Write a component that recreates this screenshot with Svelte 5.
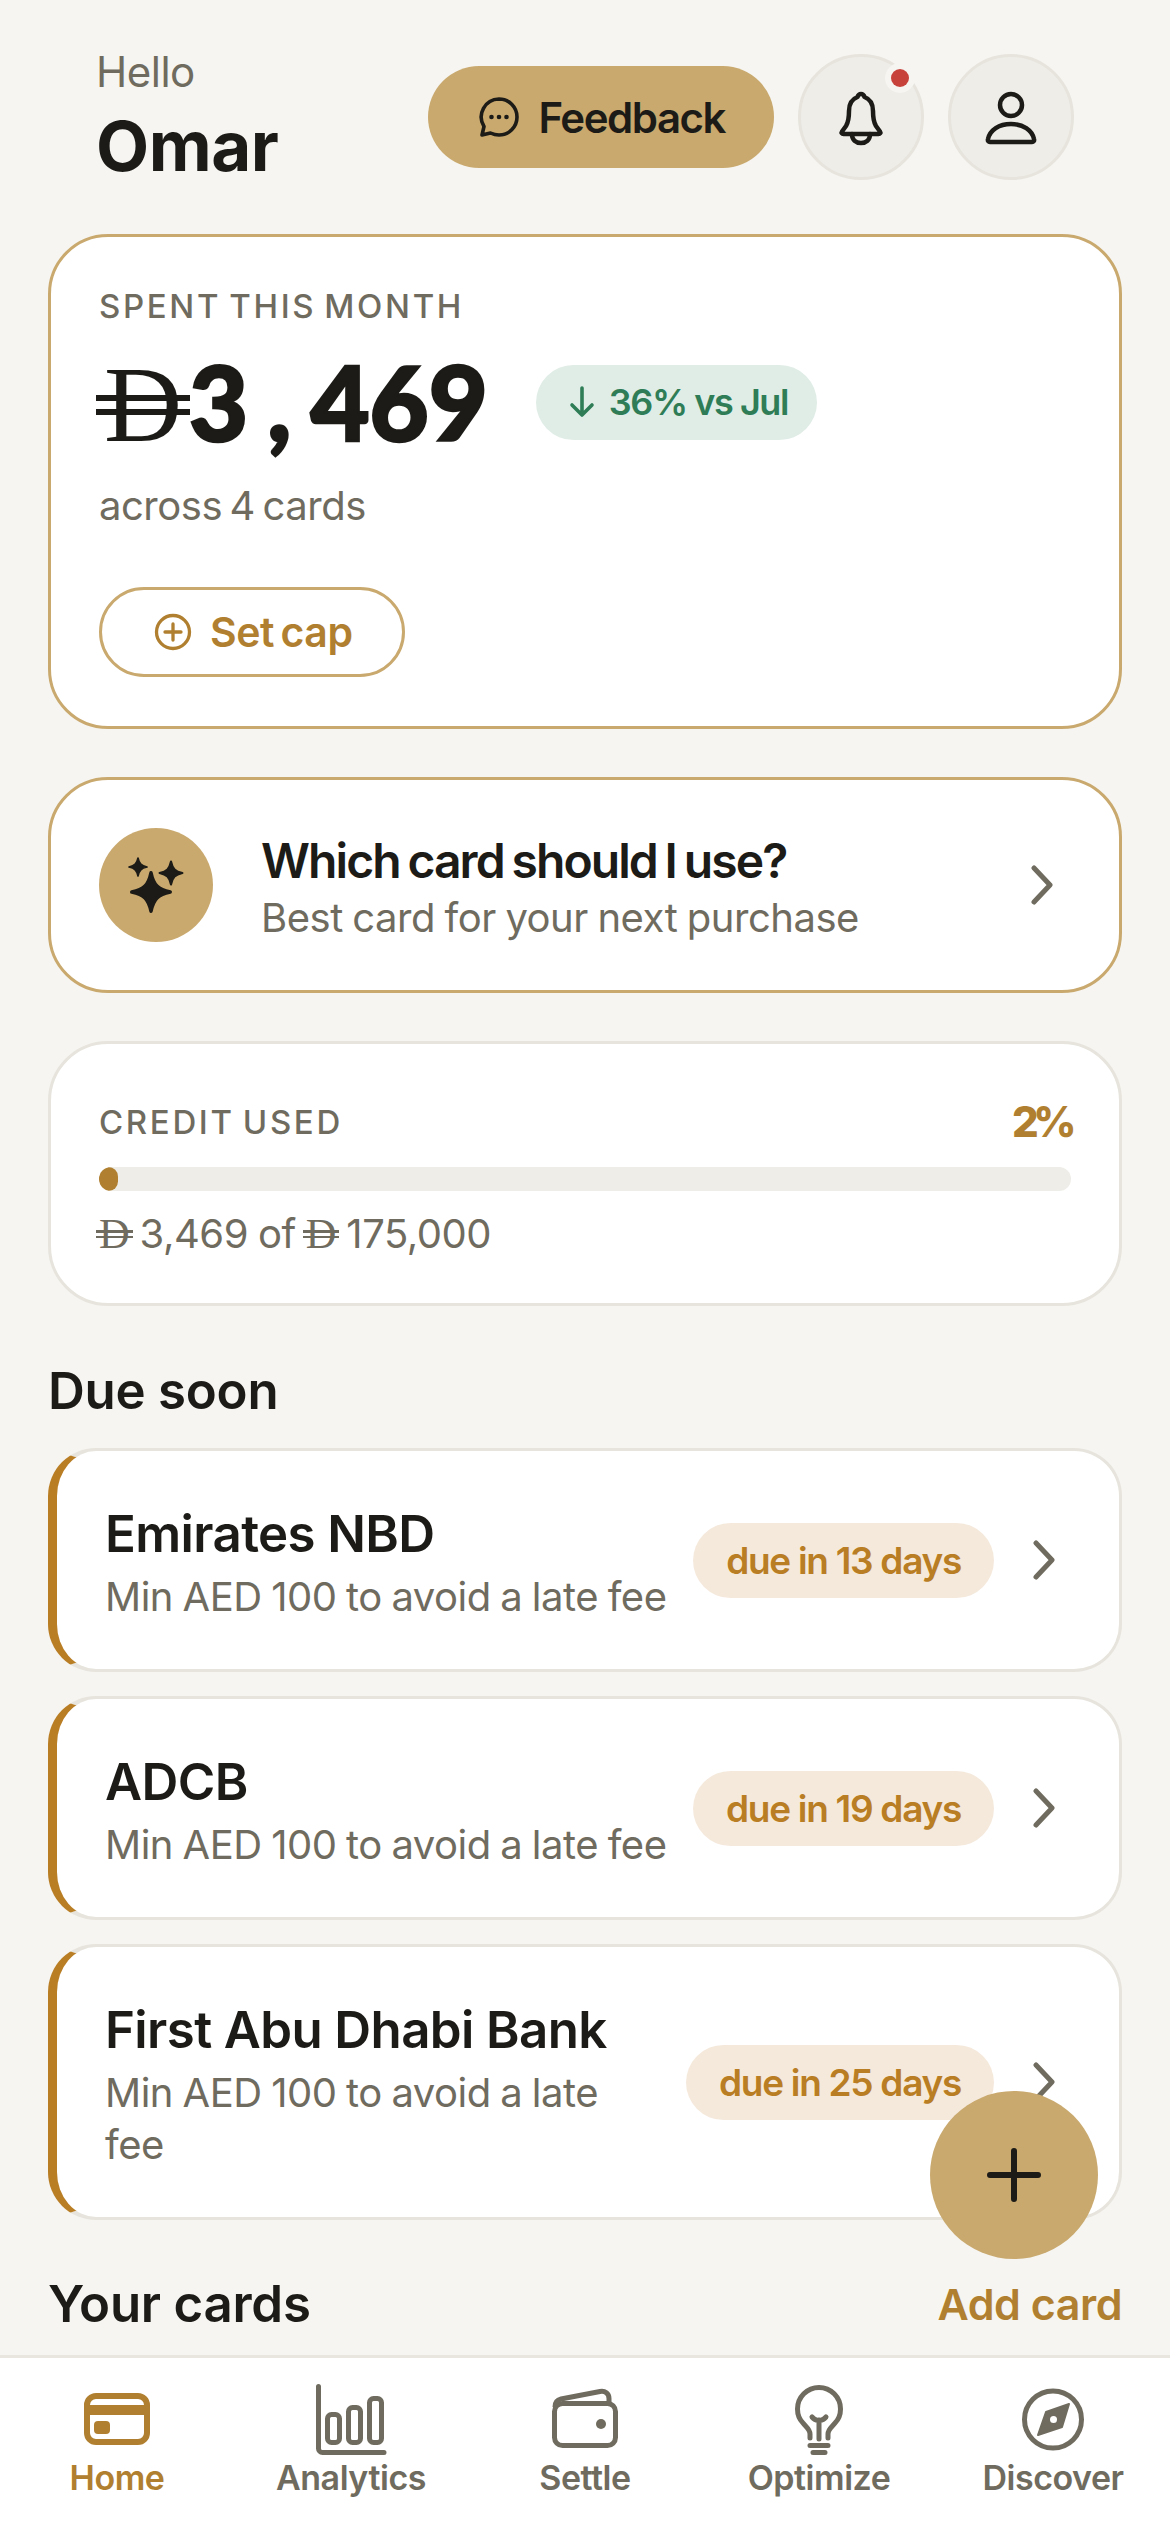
<script>
  const dues = [
    { name: "Emirates NBD", days: 13 },
    { name: "ADCB", days: 19 },
    { name: "First Abu Dhabi Bank", days: 25 }
  ];
  const stars = [
    { x: 52, y: 64, s: 1.75 },
    { x: 39, y: 39, s: 0.82 },
    { x: 72, y: 45, s: 1.04 }
  ];
  const star = "M0-11C1.5-4 4-1.5 11 0 4 1.5 1.5 4 0 11-1.5 4-4 1.5-11 0-4-1.5-1.5-4 0-11Z";
</script>

{#snippet dirham()}<span class="dh">D</span>{/snippet}

{#snippet chevron()}
  <svg class="chev" viewBox="0 0 24 40" fill="none" stroke="#6f6b5e" stroke-width="5" stroke-linecap="round" stroke-linejoin="round">
    <path d="M4 3l16 17L4 37" />
  </svg>
{/snippet}

<div class="app">
  <main>
    <header>
      <div class="hello">
        <span class="hi">Hello</span>
        <span class="who">Omar</span>
      </div>
      <div class="actions">
        <div class="feedback">
          <svg width="42" height="42" viewBox="0 0 42 42" fill="none" stroke="#1c1b17" stroke-width="3.6" stroke-linejoin="round">
            <path d="M21 3a18 18 0 0 1 0 36c-3 0-6-.8-8.5-2L4 39l2-8.5A18 18 0 0 1 21 3z" />
            <circle cx="13.5" cy="21" r="2.3" fill="#1c1b17" stroke="none" />
            <circle cx="21" cy="21" r="2.3" fill="#1c1b17" stroke="none" />
            <circle cx="28.5" cy="21" r="2.3" fill="#1c1b17" stroke="none" />
          </svg>
          <span>Feedback</span>
        </div>
        <div class="round">
          <svg width="54" height="60" viewBox="0 0 54 60" fill="none" stroke="#1c1b17" stroke-width="4.5" stroke-linecap="round" stroke-linejoin="round">
            <path d="M27 7c-2 0-3 1.500-3.500 3C18 12 15 17 15 24c0 7-.5 11-3 15l-4 5.500c-1 1.500 0 2.500 1.500 2.500h35c1.500 0 2.500-1 1.500-2.500L42 39c-2.500-4-3-8-3-15 0-7-3-12-8.500-14C30 8.500 29 7 27 7z" />
            <path d="M18 47c0 6 4 9 9 9s9-3 9-9" />
          </svg>
          <span class="dot"></span>
        </div>
        <div class="round">
          <svg width="54" height="60" viewBox="0 0 54 60" fill="none" stroke="#1c1b17" stroke-width="4.5" stroke-linecap="round" stroke-linejoin="round">
            <circle cx="27" cy="18" r="11" />
            <path d="M6 55c-1.500 0-2.500-1-2-3C6 43 15 37 27 37s21 6 23 15c.5 2-.5 3-2 3z" />
          </svg>
        </div>
      </div>
    </header>

    <section class="card gold spent">
      <div class="label">SPENT THIS MONTH</div>
      <div class="amount-row">
        <div class="amount">{@render dirham()}3<span class="comma">,</span>469</div>
        <div class="trend">
          <svg width="26" height="36" viewBox="0 0 26 36" fill="none" stroke="#2e7d57" stroke-width="3.6" stroke-linecap="round" stroke-linejoin="round">
            <path d="M13 4v27M3 21l10 10 10-10" />
          </svg>
          <span>36% vs Jul</span>
        </div>
      </div>
      <div class="across">across 4 cards</div>
      <div class="setcap">
        <svg width="38" height="38" viewBox="0 0 38 38" fill="none" stroke="#b08030" stroke-width="3.3" stroke-linecap="round">
          <circle cx="19" cy="19" r="16.5" />
          <path d="M19 11v16M11 19h16" />
        </svg>
        <span>Set cap</span>
      </div>
    </section>

    <section class="card gold which">
      <div class="spark">
        <svg width="114" height="114" viewBox="0 0 114 114" fill="#1c1b17" stroke="#1c1b17" stroke-linejoin="round">
          {#each stars as st}
            <path d={star} stroke-width="2" transform="translate({st.x} {st.y}) scale({st.s})" />
          {/each}
        </svg>
      </div>
      <div class="which-text">
        <div class="which-title">Which card should I use?</div>
        <div class="which-sub">Best card for your next purchase</div>
      </div>
      {@render chevron()}
    </section>

    <section class="card credit">
      <div class="credit-top">
        <span class="label">CREDIT USED</span>
        <span class="pct">2%</span>
      </div>
      <div class="bar"><div class="fill" style="width: 2%"></div></div>
      <div class="credit-sum">{@render dirham()} 3,469 of {@render dirham()} 175,000</div>
    </section>

    <h2>Due soon</h2>
    <div class="dues">
      {#each dues as due}
        <div class="due">
          <div class="due-text">
            <div class="due-name">{due.name}</div>
            <div class="due-sub">Min AED 100 to avoid a late fee</div>
          </div>
          <div class="due-pill">due in {due.days} days</div>
          {@render chevron()}
        </div>
      {/each}
    </div>

    <div class="cards-head">
      <h2>Your cards</h2>
      <span class="add">Add card</span>
    </div>
  </main>

  <div class="fab">
    <svg width="54" height="54" viewBox="0 0 54 54" fill="none" stroke="#1c1b17" stroke-width="6" stroke-linecap="round">
      <path d="M27 3v48M3 27h48" />
    </svg>
  </div>

  <nav>
    <div class="tab active">
      <svg viewBox="0 0 90 78" fill="none" stroke="currentColor" stroke-width="6">
        <rect x="15" y="17" width="60" height="46" rx="9" />
        <rect x="15" y="26" width="60" height="10" fill="currentColor" stroke="none" />
        <rect x="22" y="42" width="16" height="13" rx="4" fill="currentColor" stroke="none" />
      </svg>
      <span>Home</span>
    </div>
    <div class="tab">
      <svg viewBox="0 0 90 78" fill="none" stroke="currentColor" stroke-width="5" stroke-linecap="round">
        <path d="M12.5 7.5V69.5a4 4 0 0 0 4 4H78" />
        <rect x="21.5" y="35.5" width="12" height="28" rx="4" />
        <rect x="42.5" y="28.5" width="12" height="35" rx="4" />
        <rect x="63.5" y="19.5" width="12" height="44" rx="4" />
      </svg>
      <span>Analytics</span>
    </div>
    <div class="tab">
      <svg viewBox="0 0 90 78" fill="none" stroke="currentColor" stroke-width="5" stroke-linejoin="round">
        <rect x="14.5" y="24.5" width="61" height="42" rx="8" />
        <path d="M15 28c0-4 2-7 6-8l39-7.500c5-1 9 2 9 7V24" />
        <circle cx="61" cy="45" r="5" fill="currentColor" stroke="none" />
      </svg>
      <span>Settle</span>
    </div>
    <div class="tab">
      <svg viewBox="0 0 90 78" fill="none" stroke="currentColor" stroke-width="5" stroke-linecap="round" stroke-linejoin="round">
        <path d="M36 59v-4c0-5-4-7-7-11-3-3-5.500-8-5.500-14a21.500 21.500 0 0 1 43 0c0 6-2.500 11-5.500 14-3 4-7 6-7 11v4" />
        <path d="M45 60V41M38 38c3 3.500 5 3.500 7 3 2 .5 4 .5 7-3" />
        <path d="M36 66.5h18M39 73.500h12" />
      </svg>
      <span>Optimize</span>
    </div>
    <div class="tab">
      <svg viewBox="0 0 90 78" fill="none" stroke="currentColor" stroke-width="5">
        <circle cx="45" cy="40.5" r="28.5" />
        <path d="M61 25L38 33 30 56 54 48z" fill="currentColor" stroke="currentColor" stroke-width="2" stroke-linejoin="round" />
        <circle cx="45.5" cy="40.5" r="3.5" fill="#fff" stroke="none" />
      </svg>
      <span>Discover</span>
    </div>
  </nav>
</div>

<style>
  :global(body) {
    margin: 0;
    background: #f6f5f1;
  }

  .app {
    position: relative;
    width: 1170px;
    height: 2532px;
    display: flex;
    flex-direction: column;
    overflow: hidden;
    font-family: Inter, "Noto Sans", sans-serif;
    color: #1c1b17;
    letter-spacing: -0.03em;
  }

  main {
    flex: 1;
    min-height: 0;
    overflow: hidden;
    padding: 0 48px;
  }

  header {
    display: flex;
    justify-content: space-between;
    align-items: center;
    padding: 45px 48px 41px;
  }

  .hello {
    display: flex;
    flex-direction: column;
  }

  .hi {
    font-size: 42px;
    line-height: 54px;
    color: #6f6b5e;
  }

  .who {
    font-size: 69px;
    line-height: 94px;
    font-weight: 700;
  }

  .actions {
    display: flex;
    align-items: center;
    gap: 24px;
    margin-bottom: 4px;
  }

  .feedback {
    display: flex;
    align-items: center;
    gap: 18px;
    height: 102px;
    padding: 0 49px 0 50px;
    border-radius: 51px;
    background: #c9a96e;
    font-size: 42px;
    font-weight: 600;
    letter-spacing: -0.035em;
  }

  .round {
    position: relative;
    box-sizing: border-box;
    width: 126px;
    height: 126px;
    display: flex;
    align-items: center;
    justify-content: center;
    border-radius: 50%;
    border: 3px solid #e6e4dc;
    background: #eeede8;
  }

  .dot {
    position: absolute;
    top: 12px;
    right: 12px;
    width: 18px;
    height: 18px;
    border-radius: 50%;
    background: #c8423c;
    box-shadow: 0 0 0 6px #f6f5f1;
  }

  .card {
    box-sizing: border-box;
    background: #fff;
    border: 3px solid #e6e4dc;
    border-radius: 60px;
  }

  .gold {
    border-color: #c9a96e;
  }

  .label {
    font-size: 33px;
    line-height: 42px;
    font-weight: 500;
    letter-spacing: 0.08em;
    word-spacing: -0.1em;
    color: #6f6b5e;
  }

  .spent {
    height: 495px;
    padding: 48px 48px 0;
  }

  .amount-row {
    display: flex;
    align-items: center;
    gap: 48px;
    margin-top: 15px;
  }

  .amount {
    font-family: Lato, Inter, sans-serif;
    font-size: 102px;
    line-height: 120px;
    font-weight: 900;
    letter-spacing: 0;
    -webkit-text-stroke: 2.5px #1c1b17;
  }

  .dh {
    position: relative;
    display: inline-block;
    font-family: "Liberation Serif", serif;
    font-size: 1.06em;
    line-height: 1;
    font-weight: 400;
    letter-spacing: 0;
    -webkit-text-stroke: 0;
  }

  .dh::before,
  .dh::after {
    content: "";
    position: absolute;
    left: -0.07em;
    right: -0.07em;
    height: 0.055em;
    background: currentColor;
  }

  .dh::before {
    top: 0.408em;
  }

  .dh::after {
    top: 0.54em;
  }

  .amount .dh {
    margin: 0 7px 0 5px;
  }

  .comma {
    margin: 0 19px;
  }

  .trend {
    display: flex;
    align-items: center;
    gap: 14px;
    height: 75px;
    padding: 0 29px 0 33px;
    border-radius: 38px;
    background: #e0ede6;
    color: #2e7d57;
    font-size: 36px;
    font-weight: 600;
    letter-spacing: -0.04em;
  }

  .across {
    margin-top: 17px;
    font-size: 40px;
    line-height: 54px;
    color: #6f6b5e;
    word-spacing: -0.08em;
  }

  .setcap {
    display: inline-flex;
    align-items: center;
    gap: 18px;
    box-sizing: border-box;
    height: 90px;
    margin-top: 54px;
    padding: 0 49px 0 52px;
    border: 3px solid #c9a96e;
    border-radius: 45px;
    color: #b08030;
    font-size: 41px;
    font-weight: 600;
    word-spacing: -0.08em;
  }

  .which {
    display: flex;
    align-items: center;
    height: 216px;
    margin-top: 48px;
    padding: 0 65px 0 48px;
  }

  .spark {
    flex: none;
    width: 114px;
    height: 114px;
    border-radius: 50%;
    background: #c9a96e;
  }

  .which-text {
    flex: 1;
    margin: 5px 0 0 48px;
  }

  .which-title {
    font-size: 48px;
    line-height: 60px;
    font-weight: 600;
    letter-spacing: -0.04em;
    word-spacing: -0.05em;
  }

  .which-sub {
    font-size: 40px;
    line-height: 54px;
    color: #6f6b5e;
    word-spacing: -0.03em;
  }

  .chev {
    flex: none;
    width: 24px;
    height: 40px;
  }

  .credit {
    height: 265px;
    margin-top: 48px;
    padding: 51px 48px 0;
  }

  .credit-top {
    display: flex;
    align-items: center;
    justify-content: space-between;
  }

  .pct {
    font-size: 42px;
    line-height: 54px;
    font-weight: 800;
    letter-spacing: -0.13em;
    color: #b08030;
  }

  .bar {
    height: 24px;
    margin-top: 18px;
    border-radius: 12px;
    background: #eeede8;
    overflow: hidden;
  }

  .fill {
    height: 100%;
    border-radius: 12px;
    background: #b08030;
  }

  .credit-sum {
    margin-top: 16px;
    font-size: 40px;
    line-height: 54px;
    color: #6f6b5e;
    word-spacing: -0.02em;
  }

  h2 {
    margin: 0;
    font-size: 51px;
    line-height: 66px;
    font-weight: 600;
    letter-spacing: -0.005em;
  }

  .credit + h2 {
    margin-top: 52px;
  }

  .dues {
    display: flex;
    flex-direction: column;
    gap: 24px;
    margin-top: 24px;
  }

  .due {
    box-sizing: border-box;
    display: flex;
    align-items: center;
    padding: 46px 63px 46px 48px;
    border: 3px solid #e6e4dc;
    border-left: 9px solid #b97d24;
    border-radius: 48px;
    background: #fff;
  }

  .due-text {
    flex: 1;
    min-width: 0;
  }

  .due-name {
    font-size: 51px;
    line-height: 74px;
    font-weight: 600;
    letter-spacing: -0.012em;
  }

  .due-sub {
    font-size: 40px;
    line-height: 52px;
    color: #6f6b5e;
    word-spacing: -0.03em;
  }

  .due-pill {
    flex: none;
    height: 75px;
    margin: 0 38px 0 24px;
    padding: 0 33px;
    border-radius: 38px;
    background: #f5e9dc;
    color: #b97d24;
    font-size: 37px;
    line-height: 75px;
    font-weight: 600;
    letter-spacing: -0.035em;
  }

  .cards-head {
    display: flex;
    align-items: center;
    justify-content: space-between;
    margin-top: 51px;
  }

  .add {
    font-size: 43px;
    font-weight: 600;
    color: #b08030;
  }

  .fab {
    position: absolute;
    left: 930px;
    top: 2091px;
    width: 168px;
    height: 168px;
    display: flex;
    align-items: center;
    justify-content: center;
    border-radius: 50%;
    background: #c9a96e;
  }

  nav {
    flex: none;
    box-sizing: border-box;
    height: 177px;
    display: grid;
    grid-template-columns: repeat(5, 1fr);
    border-top: 3px solid #e8e6de;
    background: #fff;
    padding-top: 21px;
  }

  .tab {
    display: flex;
    flex-direction: column;
    align-items: center;
    color: #6f6b5e;
    font-size: 34px;
    line-height: 42px;
    font-weight: 600;
  }

  .tab svg {
    width: 90px;
    height: 78px;
  }

  .active {
    color: #b08030;
  }
</style>
